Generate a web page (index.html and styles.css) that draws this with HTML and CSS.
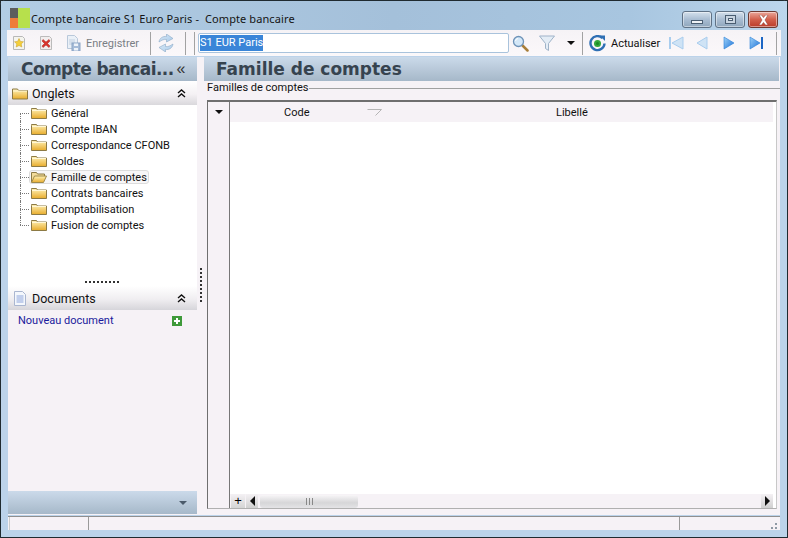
FILE: index.html
```html
<!DOCTYPE html>
<html lang="fr">
<head>
<meta charset="utf-8">
<title>Compte bancaire</title>
<link rel="stylesheet" href="styles.css">
</head>
<body>
<svg class="defs" width="0" height="0" aria-hidden="true">
  <defs>
    <linearGradient id="fg" x1="0" y1="0" x2="0" y2="1"><stop offset="0" stop-color="#fff2b8"/><stop offset="1" stop-color="#e8ac2c"/></linearGradient>
    <linearGradient id="blue" x1="0" y1="0" x2="1" y2="1"><stop offset="0" stop-color="#9fd2f8"/><stop offset="1" stop-color="#1c72d8"/></linearGradient>
    <linearGradient id="pale" x1="0" y1="0" x2="1" y2="1"><stop offset="0" stop-color="#d8e8f6"/><stop offset="1" stop-color="#a9cbea"/></linearGradient>
    <symbol id="folder" viewBox="0 0 16 12">
      <path d="M.5 2.500V1.500h5l1 1.500h9v8.500H.5z" fill="url(#fg)" stroke="#8c7a45"/>
      <path d="M1 3.500h14" stroke="#fff7d6"/>
    </symbol>
    <symbol id="folder-open" viewBox="0 0 16 12">
      <path d="M.5 11V1.500h5l1 1.500h7v2" fill="#f3dc9a" stroke="#8c7a45"/>
      <path d="M.5 11.500l3-6.500h12l-3 6.500z" fill="url(#fg)" stroke="#a08a4a"/>
    </symbol>
  </defs>
</svg>
<div class="window">
  <header class="titlebar">
    <svg class="app-logo" width="20" height="20" viewBox="0 0 20 20"><rect width="8" height="10" fill="#5d5d5d"/><rect x="8" width="12" height="20" fill="#b7e04c"/><rect y="10" width="8" height="10" fill="#ee7c3a"/></svg>
    <span class="title-text">Compte bancaire S1 Euro Paris -  Compte bancaire</span>
    <div class="winbtns">
      <span class="winbtn"><i class="glyph-min"></i></span>
      <span class="winbtn"><i class="glyph-max"></i></span>
      <span class="winbtn close"><svg width="13" height="10" viewBox="0 0 13 10"><path d="M2 0h2.500l2 2.600L8.500 0H11L8 5l3 5H8.500l-2-2.600L4.500 10H2l3-5z" fill="#fff" stroke="#8a3a30" stroke-width=".5"/></svg></span>
    </div>
  </header>

  <div class="toolbar">
    <svg class="tb-icon first" width="14" height="16" viewBox="1 0 14 16"><path d="M2.500 1.500h9l2 2v11h-11z" fill="#f4f4ee" stroke="#b8b8b8"/><path d="M8 3.500l1.400 2.900 3.100.4-2.300 2.100.6 3.100L8 10.500l-2.800 1.500.6-3.100L3.500 6.800l3.100-.4z" fill="#f4cf3a" stroke="#c99a20" stroke-width=".5"/></svg>
    <svg class="tb-icon del" width="14" height="16" viewBox="1 0 14 16"><path d="M2.500 1.500h9l2 2v11h-11z" fill="#f2eeee" stroke="#bbb"/><path d="M5 4.500l3 2.500 3-2.500 1 1.500-2.500 2.500 2.500 2.500-1 1.500-3-2.500-3 2.500-1-1.500 2.500-2.500L4 6z" fill="#d9342c" stroke="#a82420" stroke-width=".5"/></svg>
    <svg class="tb-icon save" width="16" height="16" viewBox="0 0 16 16"><path d="M2.500 .5h7l3 3v10h-10z" fill="#eaf0f7" stroke="#b9c8da"/><path d="M4 5h6M4 7h6M4 9h4" stroke="#c1d0e1"/><rect x="7" y="8" width="8" height="8" fill="#a6bcd8" stroke="#8aa3c4"/><rect x="9" y="8.500" width="4" height="2.500" fill="#eef3f9"/><rect x="9" y="13" width="4" height="2.500" fill="#eef3f9"/></svg>
    <span class="tb-label muted">Enregistrer</span>
    <span class="sep sep-a"></span>
    <svg class="tb-icon sync" width="18" height="18" viewBox="0 0 18 18"><path d="M2 8C2.500 4 6 2 9.500 2.500V0L16 4.500 9.500 8V5.500C7 5 5 6 2 8z" fill="url(#pale)" stroke="#8ba9c6" stroke-width=".6"/><path d="M16 10c-.5 4-4 6-7.500 5.500V18L2 13.500 8.500 10v2.500c2.500.5 4.500-.5 7.500-2.500z" fill="url(#pale)" stroke="#8ba9c6" stroke-width=".6"/></svg>
    <span class="sep sep-b"></span>
    <span class="sep sep-c"></span>
    <div class="search-input"><span class="selected">S1 EUR Paris</span></div>
    <svg class="tb-icon lens" width="17" height="17" viewBox="0 0 17 17"><path d="M10.500 10.500l5 5" stroke="#a87f3a" stroke-width="2.500" stroke-linecap="round"/><circle cx="6.500" cy="6.500" r="5" fill="#d4e8f8" stroke="#6e93b8" stroke-width="1.300"/><path d="M3.500 6A3 3 0 0 1 6 3.500" stroke="#fff" fill="none"/></svg>
    <svg class="tb-icon funnel" width="16" height="17" viewBox="0 0 16 17"><path d="M.5 1h15L9.500 8.500v7l-3-2v-5z" fill="#e4edf6" stroke="#9fb3c8"/></svg>
    <span class="caret"></span>
    <span class="sep sep-d"></span>
    <svg class="tb-icon refresh" width="17" height="17" viewBox="0 0 17 17"><path d="M13.500 3.200A7 7 0 1 0 15.500 8.500" fill="none" stroke="#2f6fb4" stroke-width="2.400"/><path d="M10.500 .5h5.500v5.500z" fill="#2f6fb4"/><circle cx="8.500" cy="8.500" r="3.500" fill="#34a83a"/><circle cx="8.500" cy="8.500" r="1.500" fill="#1c8a28"/></svg>
    <span class="tb-label actualiser">Actualiser</span>
    <svg class="tb-icon nav" width="16" height="14" viewBox="0 0 16 14"><path d="M1 1h2v12H1z" fill="#a9cdee"/><path d="M15 1v12L4 7z" fill="#cfe3f5" stroke="#a9cdee"/></svg>
    <svg class="tb-icon nav gap1" width="12" height="14" viewBox="0 0 12 14"><path d="M11 1v12L1 7z" fill="#cfe3f5" stroke="#a9cdee"/></svg>
    <svg class="tb-icon nav gap2" width="12" height="14" viewBox="0 0 12 14"><path d="M1 1v12l10-6z" fill="url(#blue)" stroke="#2a7fd6" stroke-width=".6"/></svg>
    <svg class="tb-icon nav gap3" width="15" height="14" viewBox="0 0 15 14"><path d="M1 1v12l10-6z" fill="url(#blue)" stroke="#2a7fd6" stroke-width=".6"/><path d="M12 1h2v12h-2z" fill="#1c66c4"/></svg>
    <span class="sep sep-e"></span>
  </div>

  <div class="main">
    <aside class="sidebar">
      <div class="side-head"><span class="side-title">Compte bancai...</span><span class="collapse">«</span></div>
      <section class="tabs-pane">
        <div class="group-head">
          <svg class="group-icon" width="16" height="13"><use href="#folder"/></svg>
          <span class="group-title">Onglets</span>
          <svg class="chev" width="9" height="9" viewBox="0 0 9 9"><path d="M1 4l3.500-3L8 4M1 8l3.500-3L8 8" fill="none" stroke="#111" stroke-width="1.400"/></svg>
        </div>
        <ul class="tree">
          <li class="tree-row"><span class="node"><svg class="folder" width="16" height="12"><use href="#folder"/></svg>Général</span></li>
          <li class="tree-row"><span class="node"><svg class="folder" width="16" height="12"><use href="#folder"/></svg>Compte IBAN</span></li>
          <li class="tree-row"><span class="node"><svg class="folder" width="16" height="12"><use href="#folder"/></svg>Correspondance CFONB</span></li>
          <li class="tree-row"><span class="node"><svg class="folder" width="16" height="12"><use href="#folder"/></svg>Soldes</span></li>
          <li class="tree-row"><span class="node current"><svg class="folder" width="16" height="12"><use href="#folder-open"/></svg>Famille de comptes</span></li>
          <li class="tree-row"><span class="node"><svg class="folder" width="16" height="12"><use href="#folder"/></svg>Contrats bancaires</span></li>
          <li class="tree-row"><span class="node"><svg class="folder" width="16" height="12"><use href="#folder"/></svg>Comptabilisation</span></li>
          <li class="tree-row last"><span class="node"><svg class="folder" width="16" height="12"><use href="#folder"/></svg>Fusion de comptes</span></li>
        </ul>
        <div class="grip"></div>
      </section>
      <section class="docs-pane">
        <div class="group-head docs-head">
          <svg class="group-icon" width="14" height="15" viewBox="0 0 14 15"><path d="M1.500.5h8l3 3v11h-11z" fill="#f4f7fc" stroke="#aab6d0"/><path d="M3.500 5h7M3.500 7h7M3.500 9h7M3.500 11h7" stroke="#8fa6dc"/></svg>
          <span class="group-title">Documents</span>
          <svg class="chev" width="9" height="9" viewBox="0 0 9 9"><path d="M1 4l3.500-3L8 4M1 8l3.500-3L8 8" fill="none" stroke="#111" stroke-width="1.400"/></svg>
        </div>
        <div class="doc-row">
          <span class="doc-link">Nouveau document</span>
          <svg width="10" height="10" viewBox="0 0 10 10"><rect width="10" height="10" fill="#3f9a3a"/><path d="M5 2v6M2 5h6" stroke="#fff" stroke-width="2"/></svg>
        </div>
      </section>
      <div class="side-foot"><span class="foot-caret"></span></div>
    </aside>

    <div class="splitter"><span class="split-grip"></span></div>

    <section class="content">
      <div class="content-head">Famille de comptes</div>
      <div class="legend-row"><span class="legend">Familles de comptes</span><span class="legend-line"></span></div>
      <div class="grid-box">
        <div class="grid-selector">
          <div class="selector-top"><span class="caret"></span></div>
        </div>
        <div class="grid-main">
          <div class="grid-headers">
            <span class="col col-code">Code<svg class="sort" width="15" height="7" viewBox="0 0 15 7"><path d="M.5.500h14l-6 6" fill="none" stroke="#b5b5b5"/></svg></span>
            <span class="col col-lib">Libellé</span>
          </div>
          <div class="grid-body"></div>
          <div class="scrollbar">
            <span class="sb-plus">+</span>
            <span class="sb-btn"><span class="arrow-left"></span></span>
            <div class="sb-track"><span class="sb-thumb"><span class="thumb-lines"></span></span></div>
            <span class="sb-btn"><span class="arrow-right"></span></span>
          </div>
        </div>
      </div>
    </section>
  </div>

  <footer class="statusbar">
    <span class="st st1"></span>
    <span class="st st2"></span>
    <span class="st st3"><svg width="8" height="8" viewBox="0 0 8 8"><path d="M5 1h2v2H5zM1 5h2v2H1zM5 5h2v2H5z" fill="#8f9aa5"/></svg></span>
  </footer>
</div>
</body>
</html>
```
FILE: styles.css
```css
* { box-sizing: border-box; }
html, body { margin: 0; padding: 0; }
body {
  width: 788px; height: 538px; overflow: hidden;
  font-family: Roboto, "Liberation Sans", sans-serif;
  font-size: 11px; color: #111; background: #23292c;
}
.defs { position: absolute; }
.window {
  width: 788px; height: 538px;
  display: flex; flex-direction: column;
  border: 1px solid #1f2a30; border-radius: 5px 5px 0 0;
  background: #bcd3ea;
  padding: 0 7px 7px;
}
.titlebar {
  height: 29px; flex: none;
  display: flex; align-items: center;
  margin: 0 -7px; padding: 0 9px 0 9px;
  background: linear-gradient(90deg, #b2cde4 0%, #a4c0da 50%, #a8c6e0 80%, #bcd6ec 100%);
}
.app-logo { flex: none; margin-top: 4px; }
.title-text {
  margin-left: 1px; font-family: "Noto Sans", sans-serif; font-size: 11px; color: #141414;
  white-space: pre; margin-top: 6px; letter-spacing: .1px;
}
.winbtns { margin-left: auto; display: flex; gap: 3px; margin-top: 8px; }
.winbtn {
  width: 30px; height: 17px; display: flex; align-items: center; justify-content: center;
  border: 1px solid #5f7286; border-radius: 3px;
  background: linear-gradient(#d4e0ec, #a9bdd2 50%, #8fa6bc);
  box-shadow: inset 0 0 0 1px rgba(255,255,255,.45);
}
.winbtn.close { border-color: #6e3a32; background: linear-gradient(#eba79a, #d2604c 50%, #bb3c2a); }
.glyph-min { width: 12px; height: 4px; margin-top: 5px; background: #eef2f6; border: 1px solid #4a5e72; }
.glyph-max { width: 11px; height: 9px; border: 1px solid #4a5e72; background: #eef2f6; box-shadow: inset 0 0 0 2px #c8d4e0, inset 0 0 0 3px #4a5e72; }

.toolbar {
  height: 26px; flex: none; display: flex; align-items: center;
  background: linear-gradient(#f6f3f6, #fbf8fa);
  margin: 0 -1px 1px; padding-left: 5px;
}
.tb-icon { flex: none; }
.tb-label { white-space: nowrap; }
.muted { color: #7a7f85; margin-left: 5px; width: 53px; }
.del { margin-left: 13px; }
.save { margin-left: 12px; }
.sep { flex: none; width: 1px; height: 23px; background: #a2a2a2; }
.sep-a { margin-left: 11px; }
.sync { margin-left: 6px; }
.sep-b { margin-left: 10px; }
.sep-c { margin-left: 8px; }
.search-input {
  flex: none; width: 311px; height: 20px; margin-left: 3px;
  border: 1px solid #a9c3dc; border-radius: 2px; background: #fff;
  padding: 1px 0 0 1px; line-height: 15px; display: flex; align-items: flex-start;
}
.selected { background: #3a85d8; color: #fff; padding: 0 0 1px; line-height: 15px; }
.lens { margin-left: 3px; }
.funnel { margin-left: 10px; }
.caret { flex: none; width: 0; height: 0; border: 4px solid transparent; border-top: 4px solid #111; border-bottom: 0; display: block; }
.toolbar > .caret { margin-left: 12px; }
.sep-d { margin-left: 7px; }
.refresh { margin-left: 6px; }
.actualiser { margin-left: 5px; width: 46px; }
.nav { margin-left: 11px; }
.nav.gap1 { margin-left: 12px; }
.nav.gap2 { margin-left: 15px; }
.nav.gap3 { margin-left: 14px; }
.sep-e { margin-left: 12px; }

.main { flex: 1; display: flex; min-height: 0; }
.sidebar { width: 189px; flex: none; display: flex; flex-direction: column; background: #f6f2f6; }
.side-head, .content-head, .side-foot {
  background: linear-gradient(#cbdaea, #a6b8c9);
}
.side-head { display: flex; align-items: center; padding-left: 13px; height: 24px; flex: none; }
.side-title, .content-head {
  font-family: "DejaVu Sans", sans-serif; font-weight: 700; font-size: 17px; color: #36434f; white-space: nowrap;
}
.side-title { letter-spacing: -.6px; }
.collapse { font-size: 16px; margin-left: 3px; color: #333; line-height: 1; font-family: "Liberation Sans", sans-serif; }
.tabs-pane { height: 205px; flex: none; background: #fff; display: flex; flex-direction: column; }
.group-head {
  height: 24px; flex: none; display: flex; align-items: center; padding: 0 11px 0 4px;
  background: linear-gradient(#fff, #f4f1f4 55%, #d9d8dc);
}
.group-title { margin-left: 4px; font-size: 12.5px; }
.group-icon { flex: none; }
.chev { margin-left: auto; margin-top: 1px; }
.tree { list-style: none; margin: 0; padding: 0; flex: 1; position: relative; }
.tree-row { height: 16px; display: flex; align-items: center; padding-left: 21px; position: relative; }
.tree-row::before {
  content: ""; position: absolute; left: 12px; top: 8px; width: 9px;
  border-top: 1px dotted #777;
}
.tree-row::after {
  content: ""; position: absolute; left: 12px; top: 0; height: 16px;
  border-left: 1px dotted #777;
}
.tree-row:first-child::after { top: 8px; height: 8px; }
.tree-row.last::after { height: 8px; }
.folder { flex: none; margin-right: 4px; }
.node {
  display: flex; align-items: center; height: 14px; padding: 0 1px 0 1px;
  border: 1px solid transparent; border-radius: 3px; white-space: nowrap;
}
.current { background: #f7f6f7; border-color: #dcdcdc; }
.grip {
  height: 2px; width: 35px; margin: 0 auto 3px; flex: none;
  background: repeating-linear-gradient(90deg, #333 0 2px, transparent 2px 4px);
}
.docs-pane { flex: 1; display: flex; flex-direction: column; }
.docs-head { padding-left: 5px; background: linear-gradient(#fff, #f0eef1 55%, #d6d5da); }
.docs-head .group-title { margin-left: 5px; }
.doc-row { display: flex; align-items: center; justify-content: space-between; padding: 4px 15px 0 10px; }
.doc-link { color: #1a1a9c; }
.side-foot {
  height: 23px; flex: none; display: flex; align-items: center; justify-content: flex-end; padding-right: 10px;
  margin-bottom: 1px;
}
.foot-caret { width: 0; height: 0; border: 4px solid transparent; border-top: 4px solid #4b5b6b; border-bottom: 0; }
.splitter { width: 7px; flex: none; background: #f6f2f6; position: relative; }
.split-grip {
  position: absolute; left: 3px; top: 211px; width: 2px; height: 35px;
  background: repeating-linear-gradient(#333 0 2px, transparent 2px 4px);
}
.content { flex: 1; min-width: 0; display: flex; flex-direction: column; background: #f6f2f6; }
.content-head { padding-left: 12px; line-height: 25px; margin-right: 1px; height: 24px; flex: none; }
.legend-row { height: 14px; display: flex; align-items: center; padding-left: 3px; flex: none; }
.legend { white-space: nowrap; line-height: 14px; }
.legend-line { flex: 1; height: 1px; background: #a0a0a0; }
.grid-box {
  flex: 1; min-height: 0; margin: 5px 3px 6px; display: flex;
  border: 1px solid #6f6f6f; border-top-width: 2px; border-bottom: 1px solid #b0b0b0; border-right-color: #c8c8c8;
}
.grid-selector { width: 22px; flex: none; border-right: 1px solid #777; background: #f6f2f6; }
.selector-top { height: 20px; display: flex; align-items: center; justify-content: center; }
.grid-main { flex: 1; min-width: 0; display: flex; flex-direction: column; background: #fff; }
.grid-headers { height: 20px; flex: none; display: flex; align-items: center; background: #f6f2f6; margin-right: 3px; padding-top: 1px; }
.col { display: block; white-space: nowrap; }
.col-code { margin-left: 54px; display: flex; align-items: center; width: 149px; }
.sort { margin-left: 58px; }
.col-lib { margin-left: 123px; }
.grid-body { flex: 1; min-height: 0; }
.scrollbar { height: 14px; flex: none; display: flex; align-items: center; background: #f6f2f6; margin-right: 3px; }
.sb-plus { width: 14px; height: 14px; margin-left: 1px; text-align: center; font-size: 13px; line-height: 13px; font-family: "Liberation Sans", sans-serif; color: #000; background: linear-gradient(#f4f1f4, #d4d4d4); }
.sb-btn { width: 12px; height: 14px; flex: none; display: flex; align-items: center; justify-content: center; background: linear-gradient(#f4f1f4, #d0d0d0); }
.sb-plus + .sb-btn { margin-left: 1px; }
.arrow-left { width: 0; height: 0; border: 5px solid transparent; border-right: 5px solid #111; border-left: 0; }
.arrow-right { width: 0; height: 0; border: 5px solid transparent; border-left: 5px solid #111; border-right: 0; }
.sb-track { flex: 1; height: 13px; padding-left: 2px; }
.sb-thumb {
  display: flex; align-items: center; justify-content: center;
  width: 98px; height: 13px; border-radius: 3px;
  background: linear-gradient(#f8f6f8, #d6d6d8 60%, #e4e3e6);
}
.thumb-lines { width: 7px; height: 7px; background: repeating-linear-gradient(90deg, #888 0 1px, transparent 1px 3px); }
.statusbar {
  height: 14px; flex: none; margin-top: 1px; display: flex;
  background: #f6f2f6; border-top: 1px solid #8f8f8f;
}
.st { display: block; height: 13px; }
.st1 { width: 80px; margin-left: 1px; border-right: 1px solid #9a9a9a; border-left: 1px solid #ccc; }
.st2 { flex: 1; border-right: 1px solid #9a9a9a; }
.st3 { width: 100px; display: flex; align-items: flex-end; justify-content: flex-end; padding-right: 2px; }
```
